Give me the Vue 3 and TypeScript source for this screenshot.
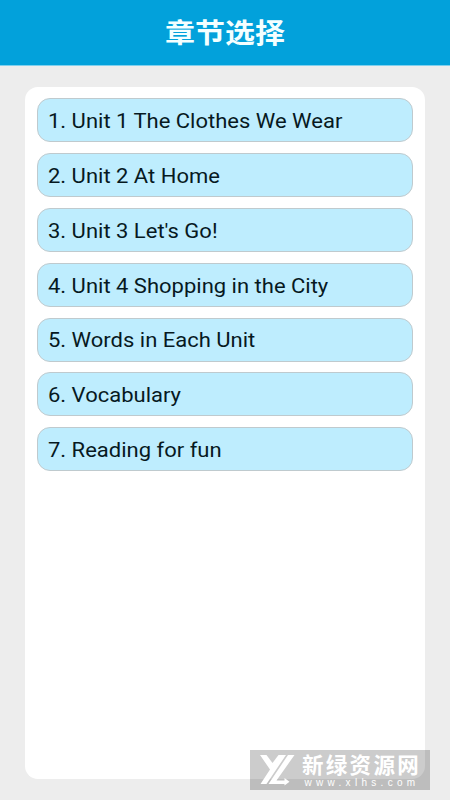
<script setup lang="ts">
const chapters: string[] = [
  'Unit 1 The Clothes We Wear',
  'Unit 2 At Home',
  "Unit 3 Let's Go!",
  'Unit 4 Shopping in the City',
  'Words in Each Unit',
  'Vocabulary',
  'Reading for fun',
]
</script>

<template>
  <div class="screen">
    <header class="bar"><h1 class="title">章节选择</h1></header>
    <main class="panel">
      <ol class="list">
        <li v-for="(name, i) in chapters" :key="name" class="item">
          <span class="label">{{ i + 1 }}. {{ name }}</span>
        </li>
      </ol>
    </main>
    <div class="mark">
      <svg class="logo" viewBox="0 0 40 38" aria-hidden="true">
        <path
          d="M4 5H10.5L16.5 13L22.5 5H30L10.5 34H4.5L14 19.5Z M32 5H38.5L20.5 30.5H28.5V28L33.5 31.7L28.5 35.5V34H12.5Z"
          fill="#fff"
        />
      </svg>
      <div class="words">
        <span class="brand">新绿资源网</span>
        <span class="site">www.xlhs.com</span>
      </div>
    </div>
  </div>
</template>

<style>
body {
  margin: 0;
}
</style>

<style scoped>
.screen {
  position: relative;
  box-sizing: border-box;
  width: 450px;
  height: 800px;
  overflow: hidden;
  background: #ededed;
  font-family: Roboto, 'Noto Sans CJK SC', sans-serif;
}
.bar {
  display: flex;
  box-sizing: border-box;
  height: 66px;
  justify-content: center;
  align-items: center;
  padding-top: 2px;
  background: #02a1db;
  border-bottom: 1px solid #7fd0ee;
}
.title {
  margin: 0;
  color: #f4ffff;
  font-size: 27px;
  font-weight: 700;
  line-height: 40px;
  transform: scaleX(1.11);
}
.panel {
  box-sizing: border-box;
  height: 692px;
  margin: 21.4px 25px 0;
  padding: 11px 12.4px;
  background: #fff;
  border-radius: 13px;
}
.list {
  display: flex;
  flex-direction: column;
  gap: 10.8px;
  margin: 0;
  padding: 0;
  list-style: none;
}
.item {
  display: flex;
  box-sizing: border-box;
  height: 44px;
  align-items: center;
  padding: 1.6px 0 0 9.2px;
  background: #beedfe;
  border: 1px solid #bfcace;
  border-radius: 13px;
}
.label {
  color: #07191f;
  font-size: 20px;
  line-height: 24px;
  white-space: pre;
  transform: scaleX(1.1);
  transform-origin: left center;
}
.mark {
  position: absolute;
  left: 250px;
  top: 750px;
  display: flex;
  width: 180px;
  height: 40px;
  background: rgba(0, 0, 0, 0.2);
  color: #fff;
}
.logo {
  width: 40px;
  height: 38px;
  margin-left: 6px;
}
.words {
  display: flex;
  flex-direction: column;
  padding: 4px 0 0 6px;
  white-space: nowrap;
}
.brand {
  font-size: 21.5px;
  font-weight: 700;
  line-height: 24px;
  letter-spacing: 2.3px;
}
.site {
  padding-left: 2.5px;
  font-family: 'Liberation Sans', sans-serif;
  font-size: 10px;
  line-height: 9px;
  letter-spacing: 4.3px;
}
</style>
